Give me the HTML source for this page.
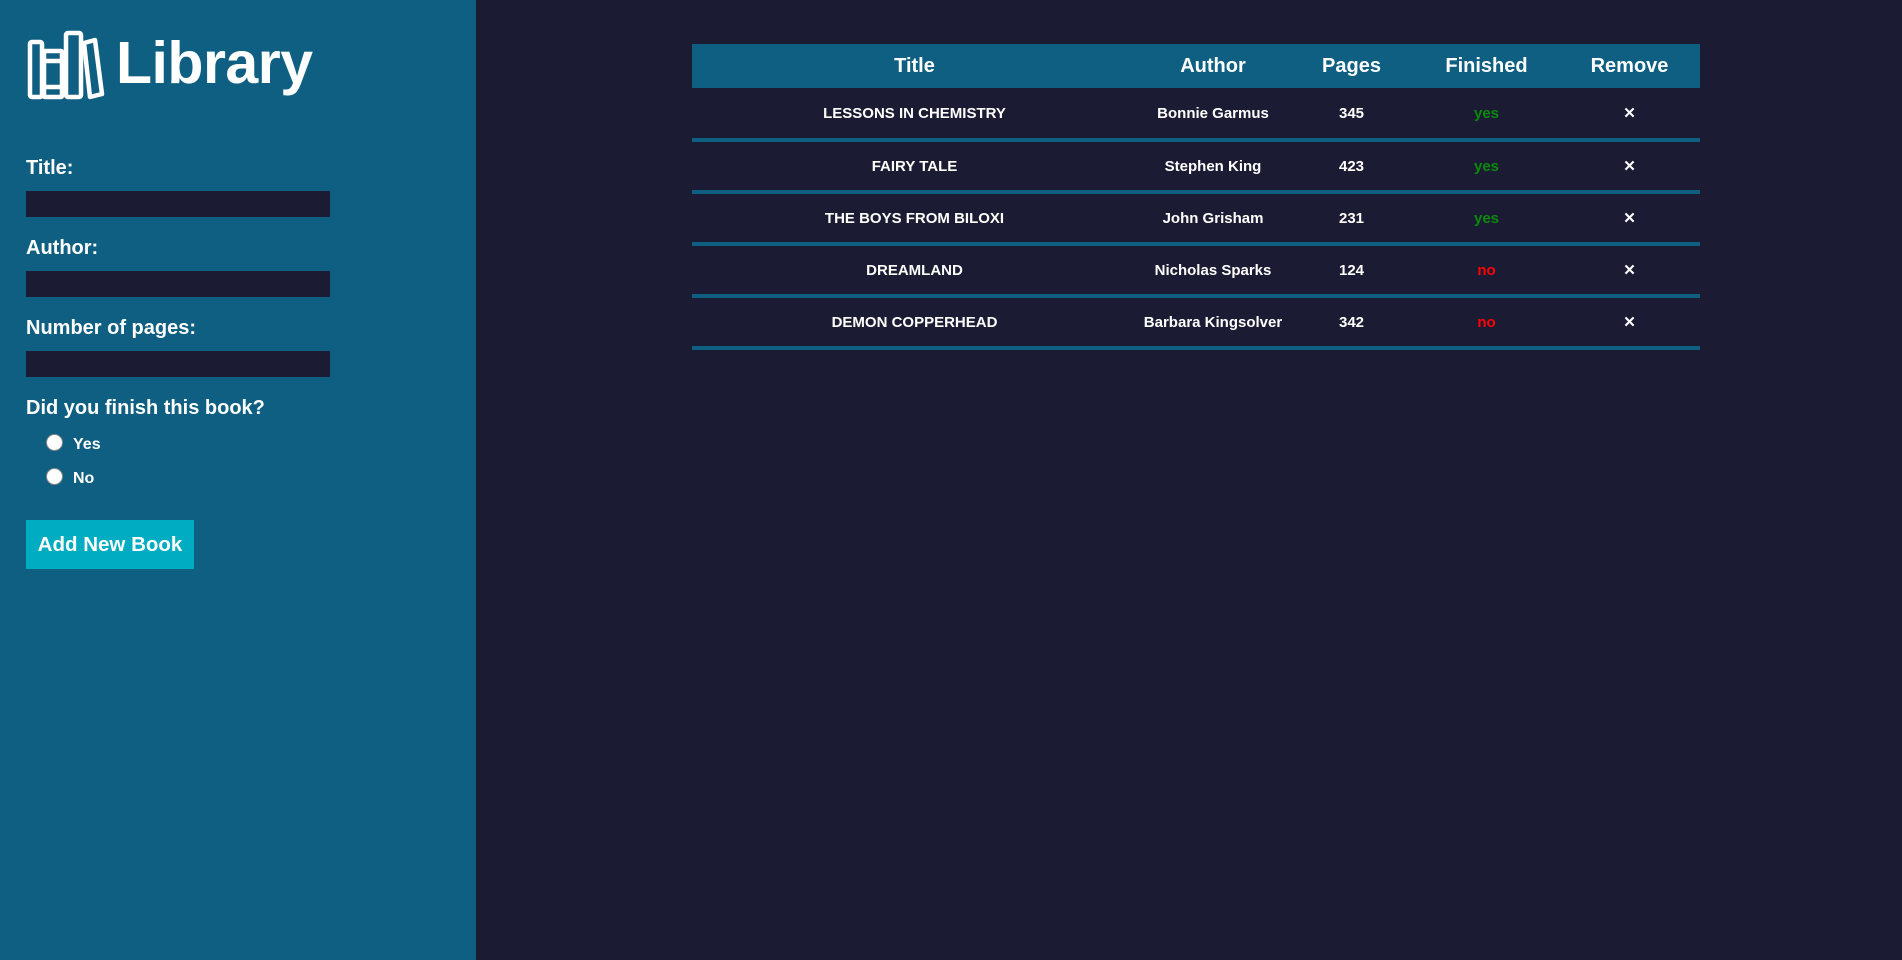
<!DOCTYPE html>
<html><head><meta charset="utf-8"><style>
*{box-sizing:border-box;margin:0;padding:0}
body{width:1902px;height:960px;background:#1b1c33;font-family:"Liberation Sans",Arial,sans-serif;color:#fff;font-weight:bold;position:relative;overflow:hidden}
#side{position:absolute;left:0;top:0;width:476px;height:960px;background:#0f5f82}
.t{position:absolute;white-space:nowrap}
.inp{position:absolute;left:26px;width:304px;height:26px;background:#1b1c33}
.lbl{font-size:20px}
.radio{position:absolute;left:46px;width:17px;height:17px;border-radius:50%;background:#fff;border:1px solid #888}
#btn{position:absolute;left:26px;top:520px;width:168px;height:49px;background:#00acc1;font-size:20.5px;line-height:49px;text-align:center}
table{position:absolute;left:692px;top:44px;width:1008px;border-collapse:collapse}
th{background:#0f5f82;height:44px;font-size:20px}
td{height:52px;font-size:15px;text-align:center;border-bottom:4px solid #0f5f82}
</style></head><body>
<div id="side">
<svg style="position:absolute;left:26px;top:29px" width="80" height="74" viewBox="26 29 80 74" fill="none" stroke="#fff" stroke-width="4.5" stroke-linejoin="round">
<rect x="30" y="42" width="12" height="55" rx="2"/>
<rect x="44" y="51" width="18" height="46" rx="1"/>
<line x1="44" y1="61" x2="62" y2="61"/><line x1="44" y1="87" x2="62" y2="87"/>
<rect x="66" y="33" width="15" height="64" rx="2"/>
<path d="M84 43 L95 40 L102 94 L90 97 Z"/>
</svg>
<div class="t" style="left:116px;top:29px;font-size:59px;letter-spacing:-0.5px">Library</div>
<div class="t lbl" style="left:26px;top:157px">Title:</div>
<div class="inp" style="top:191px"></div>
<div class="t lbl" style="left:26px;top:237px">Author:</div>
<div class="inp" style="top:271px"></div>
<div class="t lbl" style="left:26px;top:317px">Number of pages:</div>
<div class="inp" style="top:351px"></div>
<div class="t lbl" style="left:26px;top:397px">Did you finish this book?</div>
<div class="radio" style="top:434px"></div>
<div class="t" style="left:73px;top:436px;font-size:16px">Yes</div>
<div class="radio" style="top:468px"></div>
<div class="t" style="left:73px;top:470px;font-size:16px">No</div>
<div id="btn">Add New Book</div>
</div>
<table>
<colgroup><col style="width:445px"><col style="width:152px"><col style="width:125px"><col style="width:145px"><col style="width:141px"></colgroup>
<tr><th>Title</th><th>Author</th><th>Pages</th><th>Finished</th><th>Remove</th></tr>
<tr><td>LESSONS IN CHEMISTRY</td><td>Bonnie Garmus</td><td>345</td><td style="color:#0a8a0a">yes</td><td>✕</td></tr>
<tr><td>FAIRY TALE</td><td>Stephen King</td><td>423</td><td style="color:#0a8a0a">yes</td><td>✕</td></tr>
<tr><td>THE BOYS FROM BILOXI</td><td>John Grisham</td><td>231</td><td style="color:#0a8a0a">yes</td><td>✕</td></tr>
<tr><td>DREAMLAND</td><td>Nicholas Sparks</td><td>124</td><td style="color:#f00">no</td><td>✕</td></tr>
<tr><td>DEMON COPPERHEAD</td><td>Barbara Kingsolver</td><td>342</td><td style="color:#f00">no</td><td>✕</td></tr>
</table>
</body></html>
